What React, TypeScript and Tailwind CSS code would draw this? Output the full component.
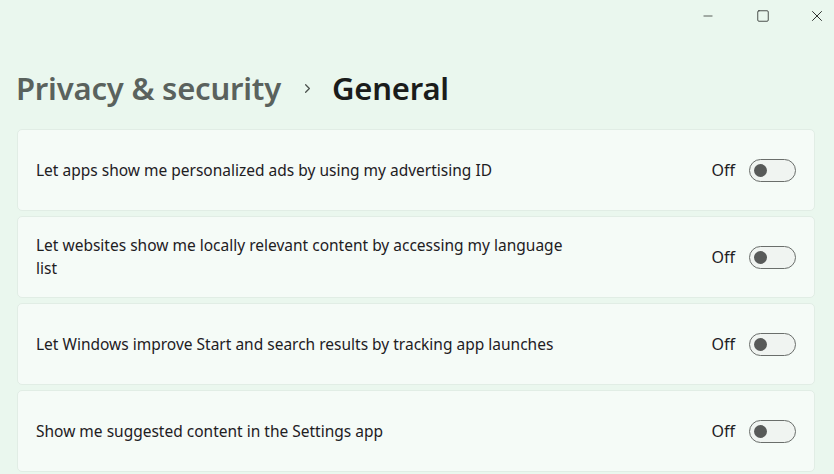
import { Minus, Square, X, ChevronRight } from 'lucide-react';

const settings = [
  { label: 'Let apps show me personalized ads by using my advertising ID' },
  { label: 'Let websites show me locally relevant content by accessing my language list' },
  { label: 'Let Windows improve Start and search results by tracking app launches' },
  { label: 'Show me suggested content in the Settings app' },
];

function Toggle() {
  return (
    <div className="flex h-[23px] w-[47px] items-center rounded-full border-[1.5px] border-[#6a6e6b] bg-[#f0f4f1] pl-[4px]">
      <div className="h-[13px] w-[13px] rounded-full bg-[#585a59]" />
    </div>
  );
}

export default function App() {
  return (
    <div
      className="h-[474px] w-[834px] overflow-hidden bg-[#eaf7ee] text-[#1b1b1b]"
      style={{ fontFamily: '"Noto Sans", "Open Sans", sans-serif' }}
    >
      {/* Title bar */}
      <div className="flex h-[32px] items-center justify-end text-[#2a2d2b]">
        <div className="flex w-[36px] justify-center">
          <Minus size={14} strokeWidth={1.3} />
        </div>
        <div className="flex w-[74px] justify-center">
          <Square size={14} strokeWidth={1.4} />
        </div>
        <div className="flex w-[34px] justify-center">
          <X size={18} strokeWidth={1.3} />
        </div>
      </div>

      {/* Breadcrumb header */}
      <div className="flex h-[97px] items-start pl-[16px] pt-[34px]">
        <h1 className="flex items-center text-[31px] font-semibold leading-[44px] tracking-[-0.2px]">
          <span className="text-[#5a625d]">Privacy &amp; security</span>
          <ChevronRight size={15} strokeWidth={2} className="ml-[19px] mr-[17px] text-[#4c524e]" />
          <span className="text-[#1a1c1b]">General</span>
        </h1>
      </div>

      {/* Settings cards */}
      <div className="flex flex-col gap-[5px] pl-[17px] pr-[19px]">
        {settings.map((s) => (
          <div
            key={s.label}
            className="flex h-[82px] items-center justify-between rounded-[5px] border border-[#e1ede5] bg-[#f5fbf7] pl-[18px] pr-[18px]"
          >
            <p className="max-w-[545px] text-[15.5px] leading-[23px] text-[#1e201f]">{s.label}</p>
            <div className="flex items-center gap-[14px]">
              <span className="text-[16px] text-[#1e201f]">Off</span>
              <Toggle />
            </div>
          </div>
        ))}
      </div>
    </div>
  );
}
